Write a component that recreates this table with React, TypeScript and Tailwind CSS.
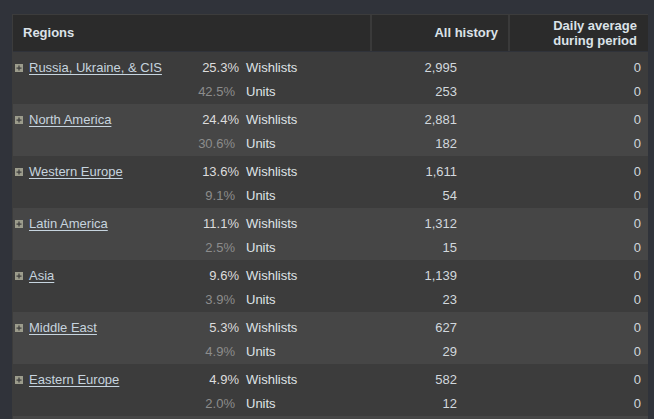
const regions = [
  { name: "Russia, Ukraine, & CIS", wPct: "25.3%", uPct: "42.5%", wishlists: "2,995", units: "253" },
  { name: "North America", wPct: "24.4%", uPct: "30.6%", wishlists: "2,881", units: "182" },
  { name: "Western Europe", wPct: "13.6%", uPct: "9.1%", wishlists: "1,611", units: "54" },
  { name: "Latin America", wPct: "11.1%", uPct: "2.5%", wishlists: "1,312", units: "15" },
  { name: "Asia", wPct: "9.6%", uPct: "3.9%", wishlists: "1,139", units: "23" },
  { name: "Middle East", wPct: "5.3%", uPct: "4.9%", wishlists: "627", units: "29" },
  { name: "Eastern Europe", wPct: "4.9%", uPct: "2.0%", wishlists: "582", units: "12" },
];

function PlusBox() {
  return (
    <svg width="8" height="8" viewBox="0 0 8 8" className="block">
      <rect x="0" y="0" width="8" height="8" fill="#9c9c8c" />
      <rect x="1.5" y="3.5" width="5" height="1.2" fill="#3a3a3a" />
      <rect x="3.4" y="1.5" width="1.2" height="5" fill="#3a3a3a" />
    </svg>
  );
}

export default function App() {
  return (
    <div
      className="w-[654px] h-[419px] overflow-hidden bg-[#30333a] pt-[14px] pl-[12px] text-[13px]"
      style={{ fontFamily: '"Liberation Sans", Arial, sans-serif' }}
    >
      <div className="w-[636px] border-l border-t border-[#3c3c3c]">
        {/* Header */}
        <div className="flex h-[36px] bg-[#2b2b2b] font-bold text-[#dbe2e8]">
          <div className="w-[357px] flex items-center pl-[10px]">Regions</div>
          <div className="w-[2px] bg-[#3a3a3a]" />
          <div className="w-[136px] flex items-center justify-end pr-[10px]">All history</div>
          <div className="w-[2px] bg-[#3a3a3a]" />
          <div className="flex-1 flex flex-col justify-center items-end pr-[11px] leading-[15px] text-right">
            <span>Daily average</span>
            <span>during period</span>
          </div>
        </div>

        {/* Rows */}
        <div className="mt-px">
          {regions.map((r, i) => (
            <div
              key={r.name}
              className={`pt-[4px] ${i % 2 === 0 ? "bg-[#3c3c3c]" : "bg-[#464646]"}`}
            >
              <div className="flex h-[24px] items-center">
                <div className="w-[16px] pl-[2px]">
                  <PlusBox />
                </div>
                <a className="w-[161px] text-[#c6d4df] underline underline-offset-2 decoration-1 whitespace-nowrap">
                  {r.name}
                </a>
                <div className="w-[49px] text-right text-[#dcdcdc]">{r.wPct}</div>
                <div className="w-[161px] pl-[7px] text-[#dfe3e6]">Wishlists</div>
                <div className="w-[57px] text-right text-[#d2d8dd]">{r.wishlists}</div>
                <div className="w-[184px] text-right text-[#d2d8dd]">0</div>
              </div>
              <div className="flex h-[24px] items-center">
                <div className="w-[177px]" />
                <div className="w-[49px] text-right pr-[4px] text-[#8c8c8c]">{r.uPct}</div>
                <div className="w-[161px] pl-[7px] text-[#dfe3e6]">Units</div>
                <div className="w-[57px] text-right text-[#d2d8dd]">{r.units}</div>
                <div className="w-[184px] text-right text-[#d2d8dd]">0</div>
              </div>
            </div>
          ))}
          <div className="h-[30px] bg-[#464646]" />
        </div>
      </div>
    </div>
  );
}
